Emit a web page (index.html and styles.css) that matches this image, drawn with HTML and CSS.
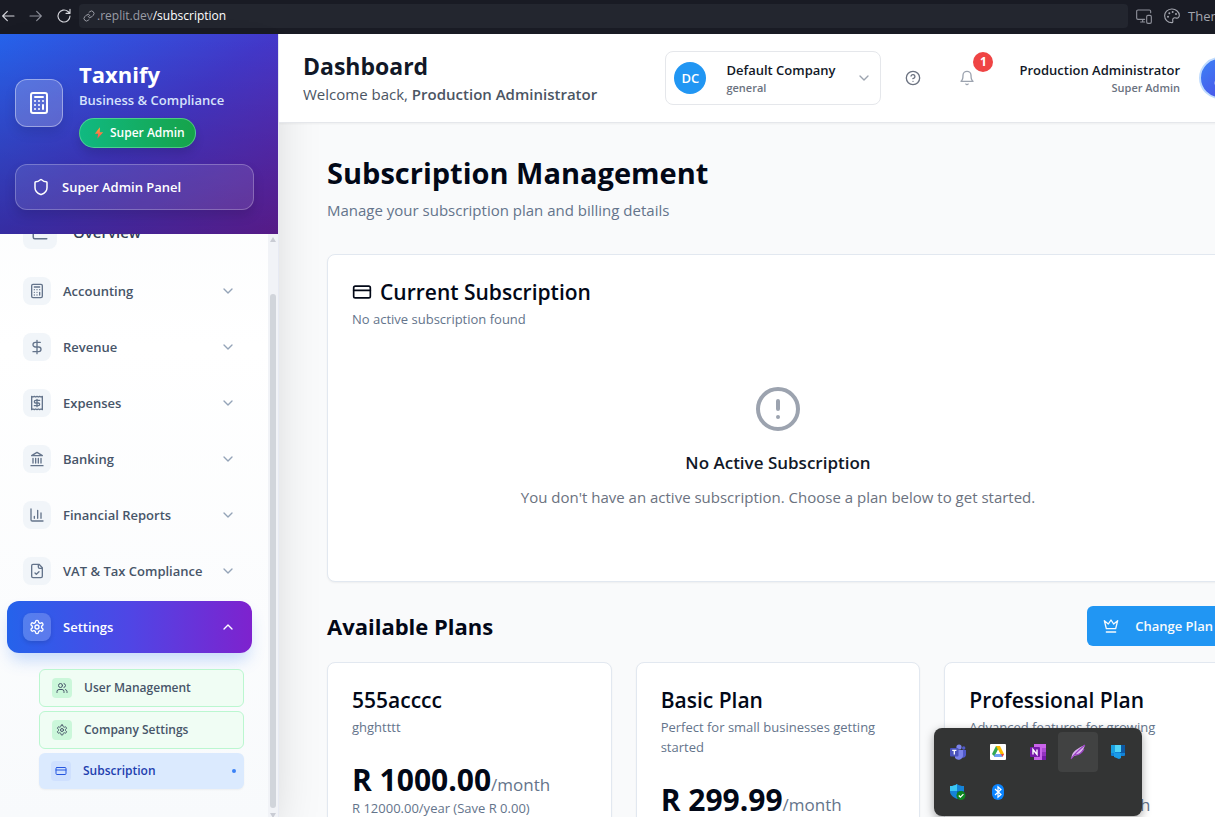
FILE: index.html
```html
<!DOCTYPE html>
<html lang="en">
<head>
<meta charset="utf-8">
<meta name="viewport" content="width=device-width, initial-scale=1">
<title>Taxnify – Subscription Management</title>
<link rel="stylesheet" href="styles.css">
</head>
<body>
<svg class="sprite" aria-hidden="true">
  <symbol id="calculator" viewBox="0 0 24 24"><rect x="4" y="2" width="16" height="20" rx="2"/><path d="M8 6h8M16 14v4M16 10h.01M12 10h.01M8 10h.01M12 14h.01M8 14h.01M12 18h.01M8 18h.01"/></symbol>
  <symbol id="shield" viewBox="0 0 24 24"><path d="M20 13c0 5-3.500 7.500-7.660 8.950a1 1 0 0 1-.67-.01C7.500 20.500 4 18 4 13V6a1 1 0 0 1 1-1c2 0 4.500-1.200 6.240-2.720a1.170 1.170 0 0 1 1.520 0C14.510 3.810 17 5 19 5a1 1 0 0 1 1 1z"/></symbol>
  <symbol id="chart" viewBox="0 0 24 24"><path d="M3 3v16a2 2 0 0 0 2 2h16M18 17V9M13 17V5M8 17v-3"/></symbol>
  <symbol id="trend" viewBox="0 0 24 24"><path d="M3 3v16a2 2 0 0 0 2 2h16M19 6l-5 5-4-4-3 3"/></symbol>
  <symbol id="dollar" viewBox="0 0 24 24"><path d="M12 2v20M17 5H9.500a3.500 3.500 0 0 0 0 7h5a3.500 3.500 0 0 1 0 7H6"/></symbol>
  <symbol id="receipt" viewBox="0 0 24 24"><path d="M4 2v20l2-1 2 1 2-1 2 1 2-1 2 1 2-1 2 1V2l-2 1-2-1-2 1-2-1-2 1-2-1-2 1Z"/><path d="M16 8h-6a2 2 0 1 0 0 4h4a2 2 0 1 1 0 4H8M12 17.500v-11"/></symbol>
  <symbol id="bank" viewBox="0 0 24 24"><path d="M3 22h18M6 18v-7M10 18v-7M14 18v-7M18 18v-7M12 2l8 5H4z"/></symbol>
  <symbol id="filecheck" viewBox="0 0 24 24"><path d="M15 2H6a2 2 0 0 0-2 2v16a2 2 0 0 0 2 2h12a2 2 0 0 0 2-2V7ZM14 2v4a2 2 0 0 0 2 2h4M9 15l2 2 4-4"/></symbol>
  <symbol id="gear" viewBox="0 0 24 24"><path d="M12.220 2h-.44a2 2 0 0 0-2 2v.18a2 2 0 0 1-1 1.730l-.43.25a2 2 0 0 1-2 0l-.15-.08a2 2 0 0 0-2.730.73l-.22.38a2 2 0 0 0 .73 2.730l.15.1a2 2 0 0 1 1 1.720v.51a2 2 0 0 1-1 1.740l-.15.09a2 2 0 0 0-.73 2.730l.22.38a2 2 0 0 0 2.730.73l.15-.08a2 2 0 0 1 2 0l.43.25a2 2 0 0 1 1 1.730V20a2 2 0 0 0 2 2h.44a2 2 0 0 0 2-2v-.18a2 2 0 0 1 1-1.730l.43-.25a2 2 0 0 1 2 0l.15.08a2 2 0 0 0 2.730-.73l.22-.39a2 2 0 0 0-.73-2.730l-.15-.08a2 2 0 0 1-1-1.740v-.5a2 2 0 0 1 1-1.740l.15-.09a2 2 0 0 0 .73-2.730l-.22-.38a2 2 0 0 0-2.730-.73l-.15.08a2 2 0 0 1-2 0l-.43-.25a2 2 0 0 1-1-1.730V4a2 2 0 0 0-2-2z"/><circle cx="12" cy="12" r="3"/></symbol>
  <symbol id="users" viewBox="0 0 24 24"><path d="M16 21v-2a4 4 0 0 0-4-4H6a4 4 0 0 0-4 4v2"/><circle cx="9" cy="7" r="4"/><path d="M22 21v-2a4 4 0 0 0-3-3.870M16 3.130a4 4 0 0 1 0 7.750"/></symbol>
  <symbol id="user" viewBox="0 0 24 24"><path d="M19 21v-2a4 4 0 0 0-4-4H9a4 4 0 0 0-4 4v2"/><circle cx="12" cy="7" r="4"/></symbol>
  <symbol id="card" viewBox="0 0 24 24"><rect x="2" y="5" width="20" height="14" rx="2"/><path d="M2 10h20"/></symbol>
  <symbol id="down" viewBox="0 0 24 24"><path d="m6 9 6 6 6-6"/></symbol>
  <symbol id="up" viewBox="0 0 24 24"><path d="m18 15-6-6-6 6"/></symbol>
  <symbol id="help" viewBox="0 0 24 24"><circle cx="12" cy="12" r="10"/><path d="M9.090 9a3 3 0 0 1 5.830 1c0 2-3 3-3 3M12 17h.01"/></symbol>
  <symbol id="bell" viewBox="0 0 24 24"><path d="M6 8a6 6 0 0 1 12 0c0 7 3 9 3 9H3s3-2 3-9M10.300 21a1.940 1.940 0 0 0 3.400 0"/></symbol>
  <symbol id="alert" viewBox="0 0 24 24"><circle cx="12" cy="12" r="10"/><path d="M12 8v4M12 16h.01"/></symbol>
  <symbol id="crown" viewBox="0 0 24 24"><path d="m2 4 3 12h14l3-12-6 5-4-6-4 6-6-5zM5 21h14"/></symbol>
  <symbol id="back" viewBox="0 0 24 24"><path d="m11 5-7 7 7 7M4 12h17"/></symbol>
  <symbol id="forward" viewBox="0 0 24 24"><path d="m13 5 7 7-7 7M20 12H3"/></symbol>
  <symbol id="reload" viewBox="0 0 24 24"><path d="M21 12a9 9 0 1 1-3-6.700L21 8M21 2v6h-6"/></symbol>
  <symbol id="link" viewBox="0 0 24 24"><path d="M10 13a5 5 0 0 0 7.540.54l3-3a5 5 0 0 0-7.070-7.070l-1.720 1.710M14 11a5 5 0 0 0-7.540-.54l-3 3a5 5 0 0 0 7.070 7.070l1.710-1.710"/></symbol>
  <symbol id="devices" viewBox="0 0 24 24"><path d="M22 7V5a2 2 0 0 0-2-2H3a2 2 0 0 0-2 2v10a2 2 0 0 0 2 2h10M7 21h6M10 17v4"/><rect x="16" y="11" width="7" height="12" rx="2"/></symbol>
  <symbol id="palette" viewBox="0 0 24 24"><path d="M12 22c2 0 1-3 1-4 0-3 3-4 5-3 3 1 5-1 5-4A11 10 0 0 0 1 12c0 5 4 10 11 10Z"/><path d="M6 13h.01M8 8h.01M13 6h.01M18 9h.01" stroke-width="3"/></symbol>
</svg>

<div class="browser">
  <button class="browser-btn" aria-label="Back"><svg class="icon i16"><use href="#back"/></svg></button>
  <button class="browser-btn dim" aria-label="Forward"><svg class="icon i16"><use href="#forward"/></svg></button>
  <button class="browser-btn" aria-label="Reload"><svg class="icon i16"><use href="#reload"/></svg></button>
  <a class="address" href="#subscription"><svg class="icon i12"><use href="#link"/></svg><span>.replit.dev<b>/subscription</b></span></a>
  <button class="browser-btn dim" aria-label="Devices"><svg class="icon i16"><use href="#devices"/></svg></button>
  <button class="browser-btn theme"><svg class="icon i16"><use href="#palette"/></svg>Themes</button>
</div>

<div class="app">
  <aside class="sidebar">
    <div class="brand">
      <div class="brand-row">
        <div class="brand-logo"><svg class="icon i24"><use href="#calculator"/></svg></div>
        <div class="brand-text">
          <div class="brand-name">Taxnify</div>
          <div class="brand-tag">Business &amp; Compliance</div>
          <div class="role-pill"><svg class="bolt" viewBox="0 0 12 14"><defs><linearGradient id="boltfill" x2="0" y2="1"><stop stop-color="#ffb02e"/><stop offset="1" stop-color="#f8475f"/></linearGradient></defs><path fill="url(#boltfill)" d="M7 0 1 8h4l-1 6 7-8H7z"/></svg>Super Admin</div>
        </div>
      </div>
      <button class="panel-btn"><svg class="icon i18"><use href="#shield"/></svg>Super Admin Panel</button>
    </div>
    <div class="side-body">
      <nav class="nav">
        <a class="nav-item overview" href="#overview"><span class="tile"><svg class="icon i18"><use href="#trend"/></svg></span>Overview</a>
        <button class="nav-item"><span class="tile"><svg class="icon i16"><use href="#calculator"/></svg></span>Accounting<svg class="icon i16 chev"><use href="#down"/></svg></button>
        <button class="nav-item"><span class="tile"><svg class="icon i16"><use href="#dollar"/></svg></span>Revenue<svg class="icon i16 chev"><use href="#down"/></svg></button>
        <button class="nav-item"><span class="tile"><svg class="icon i16"><use href="#receipt"/></svg></span>Expenses<svg class="icon i16 chev"><use href="#down"/></svg></button>
        <button class="nav-item"><span class="tile"><svg class="icon i16"><use href="#bank"/></svg></span>Banking<svg class="icon i16 chev"><use href="#down"/></svg></button>
        <button class="nav-item"><span class="tile"><svg class="icon i16"><use href="#chart"/></svg></span>Financial Reports<svg class="icon i16 chev"><use href="#down"/></svg></button>
        <button class="nav-item"><span class="tile"><svg class="icon i16"><use href="#filecheck"/></svg></span>VAT &amp; Tax Compliance<svg class="icon i16 chev"><use href="#down"/></svg></button>
        <button class="nav-item active"><span class="tile"><svg class="icon i16"><use href="#gear"/></svg></span>Settings<svg class="icon i16 chev"><use href="#up"/></svg></button>
        <div class="subnav">
          <a class="sub-item" href="#users"><span class="sub-tile"><svg class="icon i12"><use href="#users"/></svg></span>User Management</a>
          <a class="sub-item" href="#company"><span class="sub-tile"><svg class="icon i12"><use href="#gear"/></svg></span>Company Settings</a>
          <a class="sub-item current" href="#subscription"><span class="sub-tile"><svg class="icon i12"><use href="#card"/></svg></span>Subscription<i class="dot"></i></a>
        </div>
      </nav>
      <div class="scrollbar"><i class="arrow-up"></i><i class="thumb"></i><i class="arrow-down"></i></div>
    </div>
  </aside>

  <div class="workspace">
    <header class="topbar">
      <div class="greeting">
        <div class="page-name">Dashboard</div>
        <div class="welcome">Welcome back, <b>Production Administrator</b></div>
      </div>
      <button class="company">
        <span class="company-avatar">DC</span>
        <span class="company-text"><b>Default Company</b><small>general</small></span>
        <svg class="icon i16"><use href="#down"/></svg>
      </button>
      <button class="tool" aria-label="Help"><svg class="icon i16"><use href="#help"/></svg></button>
      <button class="tool bell" aria-label="Notifications"><svg class="icon i16"><use href="#bell"/></svg><span class="badge">1</span></button>
      <div class="user"><b>Production Administrator</b><small>Super Admin</small></div>
      <button class="user-avatar" aria-label="Account"><svg class="icon i16"><use href="#user"/></svg></button>
    </header>

    <main class="content">
      <h1>Subscription Management</h1>
      <p class="lead">Manage your subscription plan and billing details</p>
      <section class="card current-plan">
        <h2><svg class="icon i20"><use href="#card"/></svg>Current Subscription</h2>
        <p class="desc">No active subscription found</p>
        <div class="empty">
          <svg class="icon i48"><use href="#alert"/></svg>
          <h3>No Active Subscription</h3>
          <p>You don't have an active subscription. Choose a plan below to get started.</p>
        </div>
      </section>
      <div class="plans-head">
        <h2>Available Plans</h2>
        <button class="primary"><svg class="icon i16"><use href="#crown"/></svg>Change Plan</button>
      </div>
      <div class="plans">
        <section class="card plan">
          <h2>555acccc</h2>
          <p class="desc">ghghtttt</p>
          <div class="price"><b>R 1000.00</b>/month</div>
          <p class="desc">R 12000.00/year (Save R 0.00)</p>
        </section>
        <section class="card plan">
          <h2>Basic Plan</h2>
          <p class="desc">Perfect for small businesses getting started</p>
          <div class="price"><b>R 299.99</b>/month</div>
        </section>
        <section class="card plan">
          <h2>Professional Plan</h2>
          <p class="desc">Advanced features for growing businesses</p>
          <div class="price"><b>R 599.99</b>/month</div>
        </section>
      </div>
    </main>
  </div>
</div>

<div class="tray">
  <span><svg class="tray-icon" viewBox="0 0 16 16"><circle cx="9" cy="3" r="2.600" fill="#7b83eb"/><circle cx="13.700" cy="4" r="1.700" fill="#5059c9"/><path d="M11 6h5v5a3 3 0 0 1-4 2.500z" fill="#5059c9"/><path d="M5 6h8v5a4.500 4.500 0 0 1-8 3z" fill="#7b83eb"/><rect y="4" width="8.500" height="8.500" rx="1" fill="#4b53bc"/><path d="M2.200 6.300h4.200M4.300 6.300v4.300" stroke="#fff" stroke-width="1.300"/></svg></span>
  <span><svg class="tray-icon" viewBox="0 0 16 16"><rect width="16" height="16" rx="1" fill="#fff"/><path d="M6 2h4L5 13 2 10z" fill="#34a853"/><path d="M6 2h4l4 8h-4z" fill="#fbbc04"/><path d="M5 10h9l-2 3H4z" fill="#6ea0f6"/><path d="M11 10h3l-1.500 3z" fill="#ea4335"/><path d="m8 5.500 2.400 4.500H5.600z" fill="#fff"/></svg></span>
  <span><svg class="tray-icon" viewBox="0 0 16 16"><path d="M4 0h12v16H4z" fill="#ca64ea"/><path d="M12 4h4v4h-4z" fill="#ae4bd5"/><path d="M12 8h4v4h-4z" fill="#9332bf"/><path d="M12 12h4v4h-4z" fill="#7719aa"/><rect y="3" width="10" height="10" rx="1" fill="#7719aa"/><path d="M3 10.500v-5l4 5v-5" fill="none" stroke="#fff" stroke-width="1.400"/></svg></span>
  <span class="hover"><svg class="tray-icon" viewBox="0 0 16 16"><path d="M15 1C10 3 3 7 2 11l-1 4 3-3c5-1 9-4 11-11z" fill="#d9b3ee"/><path d="M15 1C10 5 6 8 1 15M14 5c-2 4-6 6-9 6" stroke="#9b3fc4" stroke-width="1.200" fill="none"/></svg></span>
  <span><svg class="tray-icon" viewBox="0 0 16 16"><rect x="1" y="1" width="14" height="11" rx="1" fill="#1282d7"/><path d="M10 1h4a1 1 0 0 1 1 1v7h-5z" fill="#0c59a4"/><path d="M1 1h4v8H1z" fill="#1ba1e2"/><path d="M5 1h6v7H5z" fill="#50d4f7"/><path d="M4 9h7v5l-2 1-5-2z" fill="#1a9be8"/></svg></span>
  <span><svg class="tray-icon" viewBox="0 0 16 16"><path d="M7 0c2 1.500 4 2 7 2v5c0 4-3 6-7 8-4-2-7-4-7-8V2c3 0 5-.5 7-2z" fill="#1583d8"/><path d="M7 0v7H0V2c3 0 5-.5 7-2z" fill="#3cc8f4"/><path d="M7 7h7c0 4-3 6-7 8z" fill="#0b5cad"/><circle cx="11" cy="11.500" r="4.500" fill="#0e8420"/><path d="m8.800 11.500 1.600 1.600 3-3" fill="none" stroke="#fff" stroke-width="1.300"/></svg></span>
  <span><svg class="tray-icon" viewBox="0 0 16 16"><rect x="2" width="12" height="16" rx="6" fill="#0a84ff"/><path d="m5 5 6 5.500-3 2.700V2.800l3 2.700L5 11" fill="none" stroke="#fff" stroke-width="1.200"/></svg></span>
</div>
</body>
</html>
```
FILE: styles.css
```css
* { box-sizing: border-box; margin: 0; }

body {
  height: 100vh;
  display: flex;
  flex-direction: column;
  overflow: hidden;
  font: 15px/24px "Open Sans", "Noto Sans", sans-serif;
  color: #020817;
  background: #f9fafb;
}

button { font: inherit; color: inherit; background: none; border: 0; padding: 0; cursor: pointer; }
a { color: inherit; text-decoration: none; }
.sprite { position: absolute; width: 0; height: 0; }

.icon { fill: none; stroke: currentColor; stroke-width: 2; stroke-linecap: round; stroke-linejoin: round; flex: none; }
.i12 { width: 12px; height: 12px; }
.i16 { width: 16px; height: 16px; }
.i18 { width: 18px; height: 18px; }
.i20 { width: 20px; height: 20px; }
.i24 { width: 24px; height: 24px; }
.i48 { width: 48px; height: 48px; }

/* Browser toolbar */
.browser {
  flex: none;
  height: 34px;
  padding-bottom: 2px;
  display: flex;
  align-items: center;
  background: #191b24;
  color: #d5d6dc;
  font-size: 12px;
  overflow: hidden;
}
.browser-btn { flex: none; width: 28px; display: flex; align-items: center; color: #d5d6dc; }
.browser-btn .icon { stroke-width: 1.7; }
.browser-btn.dim { color: #8d8f99; }
.address {
  flex: 1;
  height: 24px;
  margin: 0 8px 0 -5px;
  padding: 0 4px;
  display: flex;
  align-items: center;
  gap: 2px;
  border-radius: 4px;
  background: #23262f;
  color: #9a9ca5;
}
.address b { font-weight: 400; color: #fff; }
.browser-btn.theme { width: 51px; gap: 8px; font-size: 13px; color: #a3a5ae; }

/* Shell */
.app { flex: 1; min-height: 0; width: calc(100% + 62px); display: flex; }
.sidebar {
  flex: none;
  width: 279px;
  display: flex;
  flex-direction: column;
  border-right: 1px solid #e7eaf3;
  background: linear-gradient(#f8fafc, #fff 40%, #f8fafc);
  box-shadow: 0 25px 50px -12px rgba(0, 0, 0, .2);
  z-index: 1;
}
.workspace { flex: 1; min-width: 0; display: flex; flex-direction: column; }

/* Sidebar brand */
.brand {
  position: relative;
  z-index: 1;
  padding: 24px 24px 24px 15px;
  display: flex;
  flex-direction: column;
  gap: 16px;
  color: #fff;
  background: linear-gradient(transparent, rgba(0, 0, 0, .2)), linear-gradient(to bottom right, #2563eb, #4338ca, #6b21a8);
}
.brand-row { display: flex; align-items: center; gap: 16px; }
.brand-logo {
  width: 48px;
  height: 48px;
  display: grid;
  place-items: center;
  border: 1px solid rgba(255, 255, 255, .4);
  border-radius: 12px;
  background: rgba(255, 255, 255, .2);
  box-shadow: 0 6px 12px rgba(0, 0, 0, .1);
}
.brand-name { font-size: 22px; line-height: 32px; font-weight: 700; }
.brand-tag { font-size: 13px; line-height: 20px; font-weight: 600; color: #d6e2fb; }
.role-pill {
  width: max-content;
  height: 30px;
  margin-top: 8px;
  padding: 0 10px 0 14px;
  display: flex;
  align-items: center;
  gap: 6px;
  border: 1px solid rgba(134, 239, 172, .5);
  border-radius: 15px;
  background: linear-gradient(90deg, #10b981, #16a34a);
  box-shadow: 0 6px 10px rgba(0, 0, 0, .12);
  font-size: 12px;
  font-weight: 600;
}
.bolt { width: 10px; height: 12px; }
.panel-btn {
  height: 46px;
  padding: 0 16px;
  display: flex;
  align-items: center;
  gap: 12px;
  border: 1px solid rgba(255, 255, 255, .25);
  border-radius: 12px;
  background: rgba(255, 255, 255, .1);
  box-shadow: 0 6px 12px rgba(0, 0, 0, .12);
  font-size: 13px;
  font-weight: 600;
}

/* Sidebar navigation */
.side-body { flex: 1; min-height: 0; display: flex; }
.nav {
  flex: 1;
  margin-top: -31px;
  padding: 0 16px 0 7px;
  display: flex;
  flex-direction: column;
  gap: 4px;
}
.nav-item {
  flex: none;
  height: 52px;
  padding: 0 16px;
  display: flex;
  align-items: center;
  gap: 12px;
  border-radius: 12px;
  color: #475569;
  font-size: 13px;
  font-weight: 600;
}
.tile {
  width: 28px;
  height: 28px;
  display: grid;
  place-items: center;
  border-radius: 8px;
  background: #f1f5f9;
  color: #64748b;
}
.overview { height: 58px; gap: 16px; font-size: 15px; color: #334155; }
.overview .tile { width: 34px; height: 34px; }
.chev { margin-left: auto; color: #94a3b8; }
.nav-item.active {
  color: #fff;
  background: linear-gradient(90deg, #2563eb, #4f46e5 50%, #7e22ce);
  box-shadow: 0 10px 16px -3px rgba(59, 130, 246, .28);
}
.active .tile { color: #fff; background: rgba(255, 255, 255, .2); box-shadow: 0 2px 4px rgba(0, 0, 0, .12); }
.active .chev { color: #fff; }
.subnav { margin-top: 12px; padding: 0 8px 0 32px; display: flex; flex-direction: column; gap: 4px; }
.sub-item {
  height: 38px;
  padding: 0 12px;
  display: flex;
  align-items: center;
  gap: 12px;
  border: 1px solid #bbf7d0;
  border-radius: 6px;
  background: #f0fdf4;
  color: #475569;
  font-size: 12px;
  font-weight: 600;
}
.sub-tile { width: 20px; height: 20px; display: grid; place-items: center; border-radius: 4px; background: #cbf7da; }
.sub-item.current { height: 36px; border: 0; background: #dbeafe; color: #1e40af; padding-right: 8px; box-shadow: 0 1px 2px rgba(0, 0, 0, .05); }
.current .sub-tile { background: #cfe0fe; color: #2556e0; }
.dot { width: 4px; height: 4px; margin-left: auto; border-radius: 50%; background: #3b82f6; }
.scrollbar { width: 10px; padding: 3px 2px 0; display: flex; flex-direction: column; align-items: center; background: #f1f3f7; }
.arrow-up, .arrow-down { border: 3px solid transparent; }
.arrow-up { border-top: 0; border-bottom: 5px solid #c9ccd4; }
.arrow-down { margin: 5px 0 -1px; border-bottom: 0; border-top: 5px solid #c9ccd4; }
.thumb { flex: 1; width: 6px; margin-top: 52px; border-radius: 3px; background: #d1d5db; }

/* Top bar */
.topbar {
  position: relative;
  z-index: 2;
  flex: none;
  padding: 16px 24px;
  display: flex;
  align-items: center;
  border-bottom: 1px solid #e5e7eb;
  background: #fff;
  box-shadow: 0 1px 2px rgba(0, 0, 0, .05);
}
.greeting { flex: 1; }
.page-name { font-size: 23px; line-height: 32px; font-weight: 700; color: #111827; }
.welcome { color: #4b5563; }
.welcome b { font-weight: 600; }
.company {
  width: 216px;
  height: 54px;
  padding: 0 8px;
  display: flex;
  align-items: center;
  border: 1px solid #e5e7eb;
  border-radius: 8px;
  text-align: left;
}
.company-avatar {
  width: 32px;
  height: 32px;
  display: grid;
  place-items: center;
  border-radius: 50%;
  background: #2196f3;
  color: #fff;
  font-size: 13px;
  font-weight: 600;
}
.company-text { flex: 1; padding-left: 20px; }
.company .icon { color: #9ca3af; }
.company b, .company small, .user b, .user small { display: block; font-weight: 600; }
.company b, .user b { font-size: 13px; line-height: 20px; color: #111827; }
.company small, .user small { font-size: 11px; line-height: 16px; color: #6b7280; }
.tool { position: relative; margin-left: 24px; width: 16px; height: 16px; color: #6b7280; }
.tool .icon { display: block; }
.tool.bell { margin-left: 38px; color: #9ca3af; }
.badge {
  position: absolute;
  left: 14px;
  top: -18px;
  width: 20px;
  height: 20px;
  border-radius: 50%;
  background: #ef4444;
  color: #fff;
  font-size: 12px;
  line-height: 20px;
  font-weight: 700;
  text-align: center;
}
.user { margin-left: 44px; text-align: right; white-space: nowrap; }
.user-avatar {
  width: 42px;
  height: 42px;
  margin: 0 12px 0 19px;
  display: grid;
  place-items: center;
  border: 2px solid #bfdbfe;
  border-radius: 50%;
  background: linear-gradient(to bottom right, #3b82f6, #4f46e5);
  color: #fff;
}

/* Content */
.content { flex: 1; min-height: 0; overflow: hidden; padding: 32px 48px 0; }
h1 { font-size: 29px; line-height: 36px; font-weight: 700; }
.lead { margin: 7px 0 32px; color: #64748b; }
.card { border: 1px solid #e2e8f0; border-radius: 8px; background: #fff; box-shadow: 0 1px 2px rgba(0, 0, 0, .05); padding: 24px; }
h2 { font-size: 22px; line-height: 28px; font-weight: 700; }
.card h2 { font-size: 21px; line-height: 26px; margin-bottom: 4px; font-weight: 600; }
.desc { font-size: 13px; line-height: 20px; color: #64748b; }
.current-plan h2 { display: flex; align-items: center; gap: 8px; }
.empty { padding: 56px 0 48px; display: flex; flex-direction: column; align-items: center; text-align: center; }
.empty .icon { color: #9ca3af; }
.empty h3 { margin: 16px 0 8px; font-size: 17px; line-height: 28px; font-weight: 600; color: #111827; }
.empty p { color: #6b7280; }
.plans-head { margin: 24px 0 16px; display: flex; align-items: center; justify-content: space-between; }
.primary {
  height: 40px;
  padding: 0 16px;
  display: flex;
  align-items: center;
  gap: 16px;
  border-radius: 6px;
  background: #2196f3;
  color: #f8fafc;
  font-size: 13px;
  font-weight: 600;
}
.plans { display: grid; grid-template-columns: repeat(3, 1fr); gap: 24px; }
.price { margin-top: 25px; display: flex; align-items: baseline; line-height: 24px; color: #64748b; font-size: 17px; }
.price b { font-size: 30px; line-height: 36px; color: #020817; }

/* System tray flyout */
.tray {
  position: fixed;
  right: 73px;
  bottom: 1px;
  z-index: 5;
  padding: 4px;
  display: grid;
  grid-template-columns: repeat(5, 40px);
  grid-auto-rows: 40px;
  border-radius: 8px;
  background: #333434;
  box-shadow: 0 3px 10px rgba(0, 0, 0, .35);
}
.tray span { display: grid; place-items: center; border-radius: 4px; }
.tray .hover { background: #414242; }
.tray-icon { width: 16px; height: 16px; }
```
